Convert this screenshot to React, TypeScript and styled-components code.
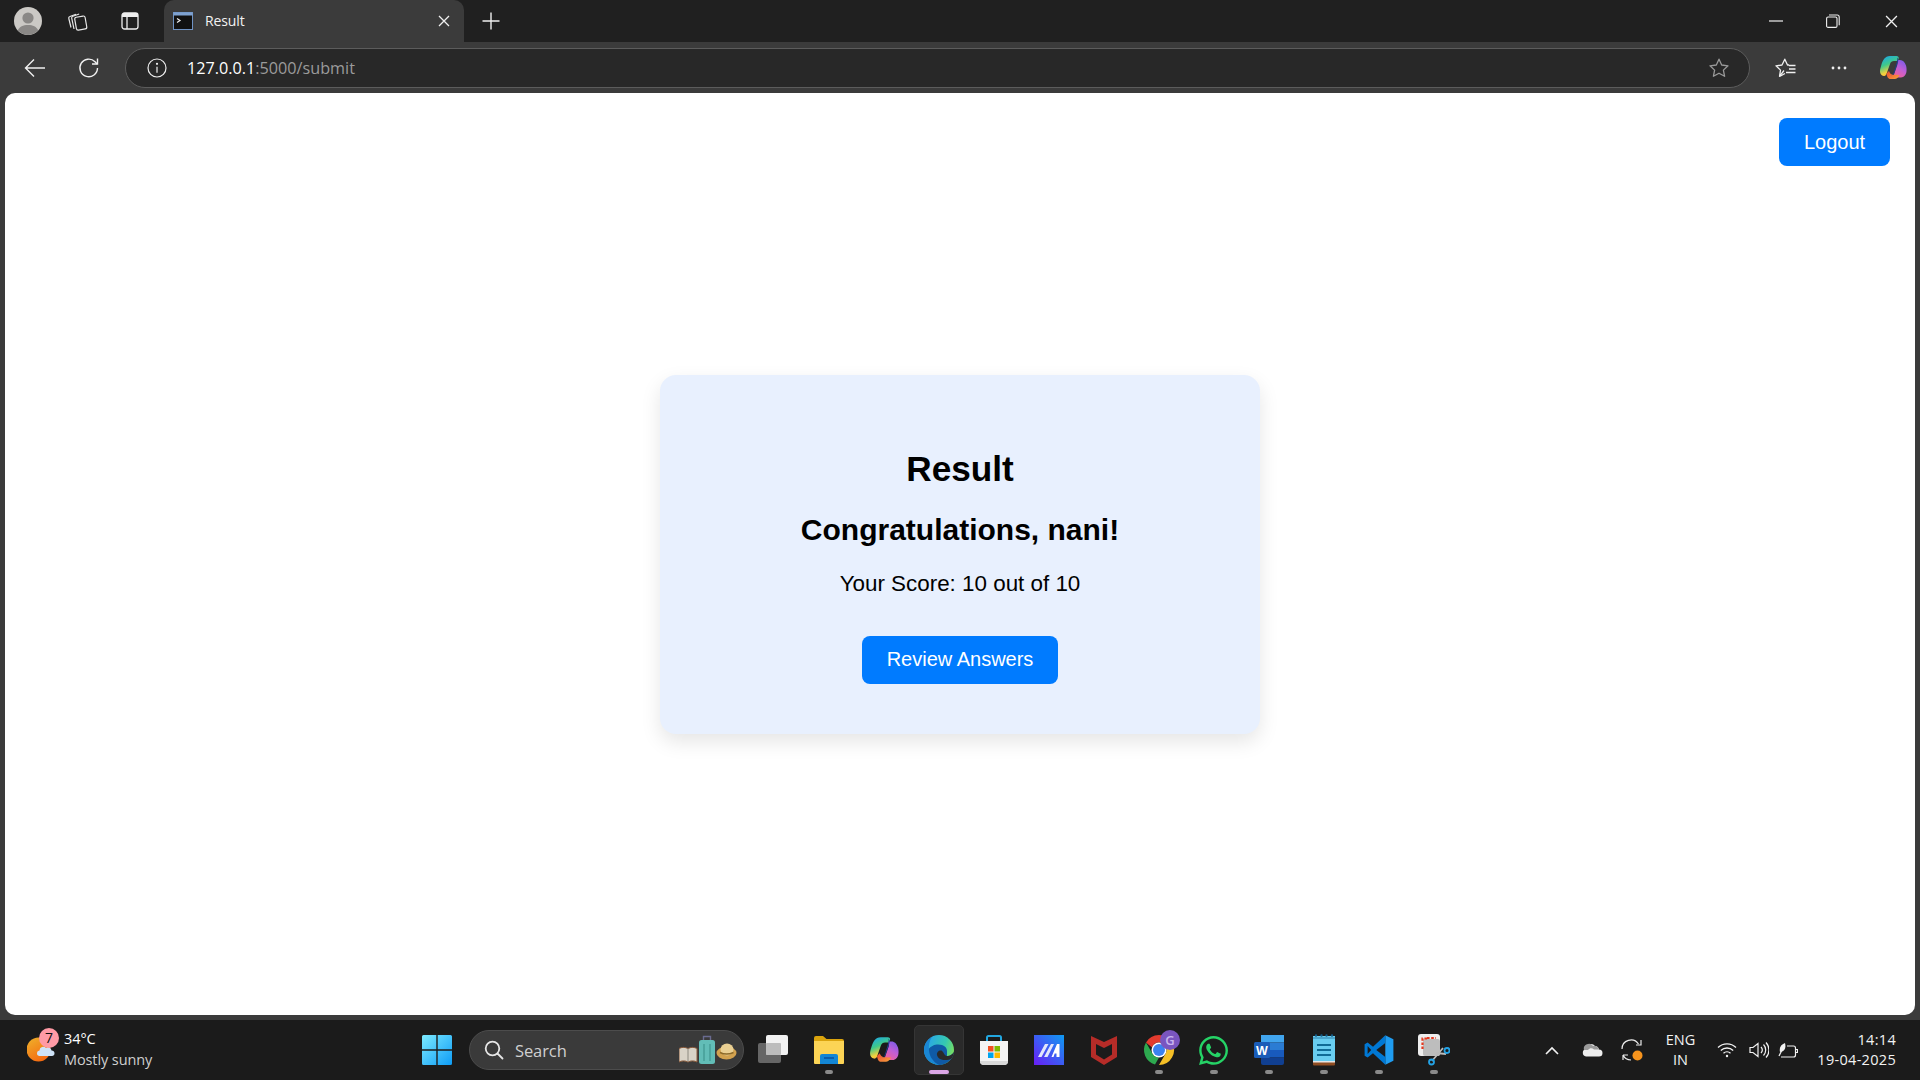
import React from "react";
import styled, { createGlobalStyle } from "styled-components";
import { FaWhatsapp } from "react-icons/fa";

const Global = createGlobalStyle`
  html, body { margin: 0; padding: 0; height: 100%; background: #3b3b3b; overflow: hidden; }
  #root { height: 100%; }
  * { box-sizing: border-box; }
`;

const Screen = styled.div`
  width: 1920px; height: 1080px; display: flex; flex-direction: column;
  font-family: "Open Sans", "Noto Sans", sans-serif; background: #3b3b3b;
`;
const TabStrip = styled.div`
  height: 42px; flex: none; display: flex; align-items: stretch; background: #202020; color: #fff;
`;
const StripButton = styled.div<{ $w: number }>`
  width: ${p => p.$w}px; flex: none; display: flex; align-items: center; justify-content: center;
`;
const Tab = styled.div`
  width: 300px; margin-left: 4px; flex: none; display: flex; align-items: center; gap: 12px;
  padding: 0 14px 0 9px; background: #3b3b3b; border-radius: 10px 10px 0 0;
`;
const TabTitle = styled.span`
  flex: 1; font-size: 14px; line-height: 42px; color: #f2f2f2; letter-spacing: -0.1px;
`;
const Spring = styled.div`flex: 1;`;
const Toolbar = styled.div`
  height: 51px; flex: none; display: flex; align-items: center; padding: 0 0 0 8px; background: #3b3b3b;
`;
const ToolButton = styled.div`
  width: 54px; height: 40px; flex: none; display: flex; align-items: center; justify-content: center;
`;
const AddressBar = styled.div`
  flex: 1; height: 40px; margin: 0 8px 0 9px; display: flex; align-items: center;
  padding: 0 20px 0 21px; border: 1px solid #5c5c5c; border-radius: 20px; background: #282828;
`;
const Url = styled.div`
  flex: 1; margin-left: 20px; font-size: 16.2px; color: #9b9b9b;
  & b { font-weight: 400; color: #fff; }
`;
const Page = styled.main`
  flex: none; height: 922px; margin: 0 5px; display: grid; background: #fff;
  border-radius: 10px; overflow: hidden;
`;
const LogoutButton = styled.button`
  grid-area: 1 / 1; justify-self: end; align-self: start; margin: 25px 25px 0 0;
  width: 111px; height: 48px; border: 0; border-radius: 8px; background: #007bff; color: #fff;
  font: 400 20px "Liberation Sans", Arial, sans-serif;
`;
const Card = styled.section`
  grid-area: 1 / 1; justify-self: center; align-self: center; width: 600px; height: 359px;
  padding: 50px 40px 0; border-radius: 16px; background: #e8f0fe; text-align: center; color: #000;
  box-shadow: 0 8px 20px rgba(0, 0, 0, 0.1); font-family: "Liberation Sans", Arial, sans-serif;
`;
const Title = styled.h1`
  margin: 24px 0 0; font-size: 35.2px; line-height: 40px; font-weight: 700;
`;
const Greeting = styled.h2`
  margin: 24px 0 0; font-size: 30px; line-height: 34px; font-weight: 700;
`;
const Score = styled.p`
  margin: 23px 0 0; font-size: 22.4px; line-height: 27px;
`;
const ReviewButton = styled.button`
  display: block; margin: 39px auto 0; width: 196px; height: 48px; border: 0; border-radius: 8px;
  background: #007bff; color: #fff; font: 400 20px "Liberation Sans", Arial, sans-serif;
`;
const Taskbar = styled.footer`
  margin-top: 5px; height: 60px; flex: none; display: flex; align-items: center; background: #1b1b1b; color: #fff;
`;
const Weather = styled.div`
  width: 418px; flex: none; height: 60px; display: flex; align-items: center; padding-left: 27px; gap: 4px;
`;
const WeatherIcon = styled.div`
  position: relative; width: 33px; height: 44px; flex: none;
`;
const WeatherBadge = styled.span`
  position: absolute; left: 12px; top: 0; width: 20px; height: 20px; border-radius: 50%;
  background: #ff9aa5; color: #111; font-size: 14px; line-height: 20px; text-align: center;
`;
const WeatherText = styled.div`
  display: flex; flex-direction: column; padding-bottom: 2px; font-size: 14.5px; line-height: 21px; color: #fff;
  letter-spacing: -0.1px;
  & small { font-size: 14.5px; color: #cfcfcf; }
`;
const StartButton = styled.div`
  width: 38px; height: 60px; flex: none; display: flex; align-items: center; justify-content: center;
`;
const SearchBox = styled.div`
  width: 275px; height: 40px; margin: 0 2px 0 13px; flex: none; display: flex; align-items: center;
  padding: 0 6px 0 14px; gap: 11px; border: 1px solid #4c4c4c; border-radius: 20px; background: #3a3a3a;
`;
const SearchLabel = styled.span`
  flex: 1; font-size: 16.5px; color: #cfcfcf; letter-spacing: -0.1px;
`;
const TaskButton = styled.div<{ $active?: boolean }>`
  position: relative; width: 55px; height: 60px; flex: none; display: flex; align-items: center; justify-content: center;
  &::before {
    content: ""; display: ${p => (p.$active ? "block" : "none")}; position: absolute;
    left: 2.5px; right: 2.5px; top: 5px; bottom: 5px; border: 1px solid #353535; border-radius: 5px; background: #2a2a2a;
  }
  & > svg { position: relative; }
`;
const RunDot = styled.span<{ $active?: boolean }>`
  position: absolute; bottom: 6px; left: 50%; transform: translateX(-50%);
  width: ${p => (p.$active ? 20 : 8)}px; height: 4px; border-radius: 2px;
  background: ${p => (p.$active ? "#dba6e6" : "#8a8a8a")};
`;
const Tray = styled.div`
  margin-left: auto; display: flex; align-items: center; height: 60px;
`;
const TrayItem = styled.div<{ $w: number }>`
  width: ${p => p.$w}px; flex: none; display: flex; align-items: center; justify-content: center;
`;
const Language = styled.div`
  width: 57px; flex: none; text-align: center; font-size: 14.5px; line-height: 20px; color: #f2f2f2;
`;
const Clock = styled.div`
  width: 117px; padding-right: 24px; flex: none; text-align: right; font-size: 14.5px; line-height: 20px; color: #f2f2f2;
  letter-spacing: 0.3px;
`;

const Avatar = () => (
  <svg width="28" height="28" viewBox="0 0 28 28">
    <circle cx="14" cy="14" r="14" fill="#cbc9c5" />
    <circle cx="14" cy="11" r="5.6" fill="#8a8886" />
    <path d="M3.8 23.5C5.5 19.5 9 18 14 18s8.500 1.500 10.200 5.500A14 14 0 0 1 3.800 23.500Z" fill="#8a8886" />
  </svg>
);
const Workspaces = () => (
  <svg width="22" height="22" viewBox="0 0 22 22" fill="none" stroke="#e8e8e8" strokeWidth="1.2">
    <path d="M4 17.500 1.800 8.500c-.3-1 .2-1.700 1.100-2L9 4.200" />
    <path d="M7 19 4.700 8.200c-.2-1 .2-1.700 1.200-2l6.300-2.200" />
    <rect x="8.500" y="6.500" width="10.500" height="13" rx="1.800" transform="rotate(-10 14 13)" fill="#202020" />
  </svg>
);
const TabActions = () => (
  <svg width="18" height="18" viewBox="0 0 18 18">
    <rect x="1" y="1" width="16" height="16" rx="2.500" fill="none" stroke="#eee" strokeWidth="1.300" />
    <path d="M1 3.500A2.500 2.500 0 0 1 3.500 1h11A2.500 2.500 0 0 1 17 3.500V5H1Z" fill="#eee" />
    <path d="M6 5v12" stroke="#eee" strokeWidth="1.300" />
  </svg>
);
const Favicon = () => (
  <svg width="20" height="18" viewBox="0 0 20 18">
    <rect x="0.500" y="0.500" width="19" height="17" fill="#111" stroke="#6f93c4" />
    <rect x="0.500" y="0.500" width="19" height="3" fill="#7ea1d0" />
    <path d="M4 6.500 7 8.500 4 10.500" fill="none" stroke="#eee" strokeWidth="1.200" />
  </svg>
);
const CloseX = ({ size = 12, w = 1.3 }: { size?: number; w?: number }) => (
  <svg width={size} height={size} viewBox="0 0 12 12" stroke="#f0f0f0" strokeWidth={w}>
    <path d="M1 1 11 11M11 1 1 11" />
  </svg>
);
const Plus = () => (
  <svg width="18" height="18" viewBox="0 0 18 18" stroke="#f0f0f0" strokeWidth="1.400"><path d="M9 0.500v17M0.500 9h17" /></svg>
);
const Minimize = () => (
  <svg width="14" height="2" viewBox="0 0 14 2" stroke="#f0f0f0" strokeWidth="1.200"><path d="M0 1h14" /></svg>
);
const Restore = () => (
  <svg width="14" height="14" viewBox="0 0 14 14" fill="none" stroke="#f0f0f0" strokeWidth="1.100">
    <rect x="0.600" y="3" width="10.400" height="10.400" rx="1.500" />
    <path d="M3 1h8.200a2 2 0 0 1 2 2v8.200" />
  </svg>
);
const Back = () => (
  <svg width="22" height="20" viewBox="0 0 22 20" fill="none" stroke="#f0f0f0" strokeWidth="1.400"><path d="M21 10H1.500M10 1.500 1.500 10l8.500 8.500" /></svg>
);
const Refresh = () => (
  <svg width="22" height="22" viewBox="0 0 22 22" fill="none" stroke="#f0f0f0" strokeWidth="1.400">
    <path d="M19.500 11a8.800 8.800 0 1 1-2.500-6.200l2.200 2.200" />
    <path d="M19.500 1.500V7h-5.500" />
  </svg>
);
const Info = () => (
  <svg width="20" height="20" viewBox="0 0 20 20" fill="none" stroke="#eee" strokeWidth="1.200">
    <circle cx="10" cy="10" r="9" /><path d="M10 8.800v6" /><circle cx="10" cy="5.800" r="0.500" fill="#eee" />
  </svg>
);
const Star = ({ color = "#9a9a9a" }: { color?: string }) => (
  <svg width="20" height="20" viewBox="0 0 20 20" fill="none" stroke={color} strokeWidth="1.300" strokeLinejoin="round">
    <path d="M10 1.200 12.700 7l6.300.800-4.600 4.300 1.200 6.200L10 15.200l-5.600 3.100 1.200-6.200L1 7.800 7.300 7Z" />
  </svg>
);
const Favorites = () => (
  <svg width="21" height="20" viewBox="0 0 21 20" fill="none" stroke="#f0f0f0" strokeWidth="1.300" strokeLinejoin="round">
    <path d="M9 12.500 4.500 18.300l1-6.200L1 7.800 7 7 9.800 1.200 12.500 7h1.500" />
    <path d="M14 7.500h6.500M14 11h6.500M11 14.500h9.500M5 18.300l5-2.800" />
  </svg>
);
const More = () => (
  <svg width="16" height="4" viewBox="0 0 16 4" fill="#eee"><circle cx="2" cy="2" r="1.400" /><circle cx="8" cy="2" r="1.400" /><circle cx="14" cy="2" r="1.400" /></svg>
);
const Copilot = ({ size = 28, id }: { size?: number; id: string }) => (
  <svg width={size} height={size} viewBox="0 0 28 28">
    <defs>
      <linearGradient id={id + "a"} x1="0.100" y1="0" x2="0.500" y2="1">
        <stop offset="0" stopColor="#1aa5ee" /><stop offset="0.450" stopColor="#3fc98a" /><stop offset="0.800" stopColor="#f6d13c" /><stop offset="1" stopColor="#f7a43a" />
      </linearGradient>
      <linearGradient id={id + "b"} x1="0.800" y1="0" x2="0.300" y2="1">
        <stop offset="0" stopColor="#7a5be8" /><stop offset="0.500" stopColor="#c05ed6" /><stop offset="1" stopColor="#f0609a" />
      </linearGradient>
      <linearGradient id={id + "c"} x1="0" y1="0" x2="1" y2="1">
        <stop offset="0" stopColor="#e8472e" /><stop offset="1" stopColor="#f9a43d" />
      </linearGradient>
    </defs>
    <path d="M11 2h6.500c1.500 0 2.500 1 2.200 2.300l-1 2.700H15c-2 0-3.300 1-3.900 2.800L7.500 20c-.5 1.500-1.800 2.300-3 2-2-.4-3.300-2-3.500-4.300-.1-2 .5-4 1.200-6.300C3.700 6.500 5.800 2 11 2Z" fill={`url(#${id}a)`} />
    <path d="M17 6h4c3 0 4.800 2.200 6 5.500.6 2 .8 4.500.4 6.500-.5 3-2.400 5.400-5.400 5.400h-8l4.300-12.500C18.700 9 19 6.500 17 6Z" fill={`url(#${id}b)`} />
    <path d="M7.500 19.500 10 17c1 2.800 2.500 4 5.500 3.800l5 .2c-1 1.800-2 3.500-4.500 4h-4.500c-2.500 0-3.600-2.500-4-5.500Z" fill={`url(#${id}c)`} />
    <path d="M18 3.500c1.300.8 1.600 2.200 1.100 3.900L15.300 19c-.6 1.600-1.700 2.200-3.300 2.200 2-.3 2.400-2 3-3.800l3-10c.3-1.400.5-2.700 0-3.900Z" fill="#1b3f8f" />
  </svg>
);
const WinLogo = () => (
  <svg width="30" height="30" viewBox="0 0 30 30">
    <defs>
      <linearGradient id="winG" x1="0" y1="0" x2="1" y2="1"><stop offset="0" stopColor="#7ceaff" /><stop offset="1" stopColor="#0e9cf5" /></linearGradient>
    </defs>
    <path d="M0 1.500A1.500 1.500 0 0 1 1.500 0h12.800v14.300H0ZM15.700 0h12.800A1.500 1.500 0 0 1 30 1.500v12.800H15.700ZM0 15.700h14.300V30H1.500A1.500 1.500 0 0 1 0 28.500ZM15.700 15.700H30v12.800a1.500 1.500 0 0 1-1.500 1.500H15.700Z" fill="url(#winG)" />
  </svg>
);
const SearchGlass = () => (
  <svg width="20" height="20" viewBox="0 0 20 20" fill="none" stroke="#e6e6e6" strokeWidth="1.800" strokeLinecap="round">
    <circle cx="8.500" cy="8.500" r="6.800" /><path d="M13.500 13.500 18.500 18.500" />
  </svg>
);
const SearchArt = () => (
  <svg width="58" height="30" viewBox="0 0 58 30">
    <path d="M0 13.500c3-1.500 6-1.500 9 0 3-1.500 6-1.500 9 0V27c-3-1.500-6-1.500-9 0-3-1.500-6-1.500-9 0Z" fill="#d9d3c7" stroke="#8a5a3a" />
    <path d="M9 13.500V27" stroke="#8d8a80" />
    <path d="M24.500 5V1.500h7V5" fill="none" stroke="#6a6b90" strokeWidth="1.400" />
    <rect x="20" y="5" width="16" height="24" rx="2.500" fill="#62bdb7" />
    <path d="M25 9v17M31 9v17" stroke="#3f9690" strokeWidth="1.200" />
    <ellipse cx="47.500" cy="18" rx="10" ry="6.500" fill="#d2a24f" />
    <ellipse cx="48" cy="14.500" rx="6.500" ry="6" fill="#e9cf92" />
    <path d="M41 17.500c4 2 9 2 13.500 0" stroke="#8c6a2a" strokeWidth="1.500" fill="none" />
  </svg>
);
const TaskViewIcon = () => (
  <svg width="32" height="30" viewBox="0 0 32 30">
    <rect x="0" y="8" width="23" height="20" rx="2" fill="#666" />
    <rect x="8" y="0" width="22" height="20" rx="2" fill="#f2f2f2" />
    <rect x="8" y="8" width="15" height="12" rx="1" fill="#bdbdbd" />
  </svg>
);
const FolderIcon = () => (
  <svg width="30" height="28" viewBox="0 0 30 28">
    <path d="M0 2a2 2 0 0 1 2-2h7l3.500 3H28a2 2 0 0 1 2 2v3H0Z" fill="#dba40d" />
    <path d="M0 5h30v22a1 1 0 0 1-1 1H1a1 1 0 0 1-1-1Z" fill="#fcd455" />
    <path d="M5 28v-8a2 2 0 0 1 2-2h14a2 2 0 0 1 2 2v8Z" transform="translate(1 0)" fill="#1386d4" />
    <path d="M10 22h10" stroke="#0a4f9c" strokeWidth="1.500" />
  </svg>
);
const EdgeIcon = () => (
  <svg width="30" height="30" viewBox="0 0 30 30">
    <defs>
      <linearGradient id="edgeB" x1="0.100" y1="0.300" x2="1" y2="0.600"><stop offset="0" stopColor="#2aa7e6" /><stop offset="0.600" stopColor="#35c9b0" /><stop offset="1" stopColor="#7de05c" /></linearGradient>
    </defs>
    <circle cx="15" cy="15" r="15" fill="url(#edgeB)" />
    <path d="M15 30C8 29 3 23 4 15 8 9 14 9 18 10c3 1 5 3 5 6v5c2 .5 5-1 7-4-.5 3-1.200 5-2.500 6.500C24.500 27.500 20 30 15 30Z" fill="#0f5aa6" />
    <path d="M15 30C6 29 0 23 0 15 0 9 4 4 8 2 5 6 4.500 11 5 15.500 5.500 22 9.500 27 15 30Z" fill="#1a86d4" />
    <path d="M17.500 15.500C15 15 12.500 17 13 20c.5 3 4 5 8 5 2.500 0 5-.5 6.500-1.500 1.500-2 2.200-4 2.500-6.500-2 3-5 4.500-7 4-3-.5-3-4-5.500-5.500Z" fill="#2a2a2a" />
  </svg>
);
const StoreIcon = () => (
  <svg width="30" height="30" viewBox="0 0 30 30">
    <path d="M8 7V2.500A1.500 1.500 0 0 1 9.500 1h11A1.500 1.500 0 0 1 22 2.500V7" fill="none" stroke="#22a7e0" strokeWidth="2" />
    <path d="M1 6h28v20a4 4 0 0 1-4 4H5a4 4 0 0 1-4-4Z" fill="#f4f4f4" />
    <path d="M1 26v0a4 4 0 0 0 4 4h20a4 4 0 0 0 4-4Z" fill="#d9d9d9" />
    <rect x="9" y="11" width="5.500" height="5.500" fill="#f25022" /><rect x="15.500" y="11" width="5.500" height="5.500" fill="#7fba00" />
    <rect x="9" y="17.500" width="5.500" height="5.500" fill="#00a4ef" /><rect x="15.500" y="17.500" width="5.500" height="5.500" fill="#ffb900" />
  </svg>
);
const MAppIcon = () => (
  <svg width="30" height="30" viewBox="0 0 30 30">
    <defs>
      <linearGradient id="mApp" x1="1" y1="0" x2="0" y2="1"><stop offset="0" stopColor="#0e9bf2" /><stop offset="1" stopColor="#6a1df5" /></linearGradient>
    </defs>
    <rect width="30" height="30" fill="url(#mApp)" />
    <path d="M4 22 11 9h3.500L7.500 22ZM10 22 17 9h3L13.500 22Z" fill="#e3e6fb" />
    <path d="M17.500 22 23 9h2.500V22h-3v-3.500h-1.800L19.500 22Z" fill="#fff" />
  </svg>
);
const McAfeeIcon = () => (
  <svg width="28" height="32" viewBox="0 0 28 32">
    <path fillRule="evenodd" d="M1 2 14 8 27 2v21l-13 8-13-8ZM6 10v10.500l8 5 8-5V10l-8 4Z" fill="#b62c28" />
  </svg>
);
const ChromeIcon = () => (
  <svg width="46" height="46" viewBox="-8 0 46 46">
    <g transform="translate(0 8)">
      <path d="M15 0a15 15 0 0 1 13 7.500H15A7.500 7.500 0 0 0 8 12.500L2 7.500A15 15 0 0 1 15 0Z" fill="#e33b2e" />
      <path d="M2 7.500 8.500 18.700A7.500 7.500 0 0 0 15 22.500L11 29.500A15 15 0 0 1 2 7.500Z" fill="#2da94f" />
      <path d="M28 7.500A15 15 0 0 1 15 30l6.500-11.300A7.500 7.500 0 0 0 21.500 11Z" fill="#f6c026" />
      <circle cx="15" cy="15" r="7.500" fill="#fff" />
      <circle cx="15" cy="15" r="6" fill="#3b82f0" />
    </g>
    <circle cx="26" cy="13" r="10" fill="#7a55bf" />
    <text x="26" y="18" textAnchor="middle" fontSize="13" fontWeight="600" fill="#c9b6ee" fontFamily="Open Sans, sans-serif">G</text>
  </svg>
);
const WordIcon = () => (
  <svg width="30" height="30" viewBox="0 0 30 30">
    <rect x="7" y="0" width="23" height="7.500" fill="#41a5ee" />
    <rect x="7" y="7.500" width="23" height="7.500" fill="#2b7cd3" />
    <rect x="7" y="15" width="23" height="7.500" fill="#185abd" />
    <path d="M7 22.500h23V28a2 2 0 0 1-2 2H9a2 2 0 0 1-2-2Z" fill="#103f91" />
    <rect x="0" y="7" width="16" height="16" rx="1.500" fill="#1a5cb8" />
    <text x="8" y="20" textAnchor="middle" fontSize="12.500" fontWeight="700" fill="#fff" fontFamily="Liberation Sans, sans-serif">W</text>
  </svg>
);
const NotepadIcon = () => (
  <svg width="24" height="32" viewBox="0 0 24 32">
    <rect x="1" y="2" width="22" height="26" fill="#68cdf0" />
    <path d="M1 27h22v3.500a1 1 0 0 1-1 1H2a1 1 0 0 1-1-1Z" fill="#8f4d22" />
    <path d="M1 27h22v1.500H1Z" fill="#e5e5e5" />
    <path d="M4 1.500h0M9.500 1.500h0M14.500 1.500h0M20 1.500h0" stroke="#145c86" strokeWidth="2.400" strokeLinecap="round" />
    <path d="M1 4h22" stroke="#2f7fa8" />
    <path d="M5 11h14M5 16h14M5 21h14" stroke="#0f6b96" strokeWidth="2" />
  </svg>
);
const VSCodeIcon = () => (
  <svg width="30" height="30" viewBox="0 0 100 100">
    <path d="M71 1 98 14v72L71 99Z" fill="#1f9cf0" />
    <path d="M71 1V27L41 50l30 23v26L30 61 12 75 2 69V31L12 25 30 39Z" fill="#0078d4" />
    <path d="M12 37 24 50 12 63Z" fill="#1b1b1b" />
  </svg>
);
const SnipIcon = () => (
  <svg width="32" height="32" viewBox="0 0 32 32">
    <rect x="0" y="0" width="22" height="22" rx="3" fill="#eeeeee" />
    <rect x="5" y="5" width="17" height="17" rx="2" fill="#bdbdbd" />
    <path d="M9 4.500H4.500V15" fill="none" stroke="#e5391f" strokeWidth="2.200" strokeDasharray="2.600 1.600" />
    <path d="M9 4h9" stroke="#e5391f" strokeWidth="2.200" strokeDasharray="2.600 1.600" />
    <path d="M14 27 25 14M18 19 28 20" stroke="#bbb" strokeWidth="1.800" />
    <circle cx="13.500" cy="28" r="2.500" fill="none" stroke="#23a3e6" strokeWidth="1.800" />
    <circle cx="29" cy="16.500" r="2.500" fill="none" stroke="#23a3e6" strokeWidth="1.800" />
  </svg>
);
const Chevron = () => (
  <svg width="14" height="9" viewBox="0 0 14 9" fill="none" stroke="#f2f2f2" strokeWidth="1.600"><path d="M1 8 7 2l6 6" /></svg>
);
const CloudIcon = () => (
  <svg width="21" height="14" viewBox="0 0 21 14">
    <path d="M4 13.500A3.800 3.800 0 0 1 4 6a5 5 0 0 1 9-3 4.500 4.500 0 0 1 4 3.500A3.500 3.500 0 0 1 17 13.500Z" fill="#ededed" />
    <path d="M2 7a5 5 0 0 1 9-4c2.500-1 5 .5 6 3.500h-5c-2-2-4.500-1.500-6 .5Z" fill="#9a9a9a" />
  </svg>
);
const SyncIcon = () => (
  <svg width="22" height="24" viewBox="0 0 22 24" fill="none" stroke="#ececec" strokeWidth="1.200">
    <path d="M1 11A9 9 0 0 1 17.500 6M20 2v5h-5" />
    <path d="M2 17h5M2 22v-5a9 9 0 0 0 8 5" />
    <circle cx="16.500" cy="17.500" r="5" fill="#f7941d" stroke="none" />
  </svg>
);
const Wifi = () => (
  <svg width="20" height="16" viewBox="0 0 20 16" fill="none" stroke="#f2f2f2" strokeWidth="1.300">
    <path d="M1 5.500a13 13 0 0 1 18 0M3.800 8.500a9 9 0 0 1 12.400 0M6.500 11.300a5 5 0 0 1 7 0" />
    <circle cx="10" cy="14" r="1.200" fill="#f2f2f2" stroke="none" />
  </svg>
);
const Speaker = () => (
  <svg width="20" height="18" viewBox="0 0 20 18" fill="none" stroke="#f2f2f2" strokeWidth="1.200">
    <path d="M1 6.500h3L9 2.500v13l-5-4H1Z" />
    <path d="M12 6a4.500 4.500 0 0 1 0 6M14.500 3.500a8 8 0 0 1 0 11M17 1.500a11 11 0 0 1 0 15" />
  </svg>
);
const Battery = () => (
  <svg width="20" height="17" viewBox="0 0 20 17" fill="none" stroke="#f2f2f2" strokeWidth="1.200">
    <path d="M9 4h6.500a2 2 0 0 1 2 2v7a2 2 0 0 1-2 2H3" />
    <path d="M18 7.500h1.500v3H18" />
    <path d="M7 1C3 2.500 1 5.500 2 10c4-.5 6.500-3.500 5-9Z" fill="#f2f2f2" stroke="none" />
    <path d="M1 14 5 6" />
  </svg>
);

const taskIcons: { key: string; el: React.ReactNode; dot?: boolean; active?: boolean }[] = [
  { key: "view", el: <TaskViewIcon /> },
  { key: "files", el: <FolderIcon />, dot: true },
  { key: "copilot", el: <Copilot size={30} id="cpB" /> },
  { key: "edge", el: <EdgeIcon />, dot: true, active: true },
  { key: "store", el: <StoreIcon /> },
  { key: "app", el: <MAppIcon /> },
  { key: "mcafee", el: <McAfeeIcon /> },
  { key: "chrome", el: <ChromeIcon />, dot: true },
  { key: "whatsapp", el: <FaWhatsapp size={33} color="#25d366" />, dot: true },
  { key: "word", el: <WordIcon />, dot: true },
  { key: "notepad", el: <NotepadIcon />, dot: true },
  { key: "vscode", el: <VSCodeIcon />, dot: true },
  { key: "snip", el: <SnipIcon />, dot: true },
];

export default function App() {
  return (
    <Screen>
      <Global />
      <TabStrip>
        <StripButton $w={55}><Avatar /></StripButton>
        <StripButton $w={45}><Workspaces /></StripButton>
        <StripButton $w={60}><TabActions /></StripButton>
        <Tab>
          <Favicon />
          <TabTitle>Result</TabTitle>
          <CloseX />
        </Tab>
        <StripButton $w={54}><Plus /></StripButton>
        <Spring />
        <StripButton $w={55}><Minimize /></StripButton>
        <StripButton $w={59}><Restore /></StripButton>
        <StripButton $w={58}><CloseX size={13} w={1.2} /></StripButton>
      </TabStrip>
      <Toolbar>
        <ToolButton><Back /></ToolButton>
        <ToolButton><Refresh /></ToolButton>
        <AddressBar>
          <Info />
          <Url><b>127.0.0.1</b>:5000/submit</Url>
          <Star />
        </AddressBar>
        <ToolButton><Favorites /></ToolButton>
        <ToolButton><More /></ToolButton>
        <ToolButton><Copilot id="cpT" /></ToolButton>
      </Toolbar>
      <Page>
        <LogoutButton>Logout</LogoutButton>
        <Card>
          <Title>Result</Title>
          <Greeting>Congratulations, nani!</Greeting>
          <Score>Your Score: 10 out of 10</Score>
          <ReviewButton>Review Answers</ReviewButton>
        </Card>
      </Page>
      <Taskbar>
        <Weather>
          <WeatherIcon>
            <svg width="33" height="44" viewBox="0 0 33 44">
              <defs>
                <linearGradient id="sun" x1="0" y1="0" x2="0.600" y2="1"><stop offset="0" stopColor="#eeb32c" /><stop offset="1" stopColor="#f56a10" /></linearGradient>
              </defs>
              <circle cx="11.500" cy="21.500" r="12" fill="url(#sun)" />
              <path d="M12 28a2.800 2.800 0 0 1 .5-5.500 3.800 3.800 0 0 1 6.500-2.500 3.500 3.500 0 0 1 5.500 2.500 2.800 2.800 0 0 1 3 3c0 1.500-1 2.500-2.500 2.500Z" fill="#cfe3f7" />
            </svg>
            <WeatherBadge>7</WeatherBadge>
          </WeatherIcon>
          <WeatherText>
            <span>34°C</span>
            <small>Mostly sunny</small>
          </WeatherText>
        </Weather>
        <StartButton><WinLogo /></StartButton>
        <SearchBox>
          <SearchGlass />
          <SearchLabel>Search</SearchLabel>
          <SearchArt />
        </SearchBox>
        {taskIcons.map(t => (
          <TaskButton key={t.key} $active={t.active}>
            {t.el}
            {t.dot && <RunDot $active={t.active} />}
          </TaskButton>
        ))}
        <Tray>
          <TrayItem $w={40}><Chevron /></TrayItem>
          <TrayItem $w={40}><CloudIcon /></TrayItem>
          <TrayItem $w={40}><SyncIcon /></TrayItem>
          <Language>ENG<br />IN</Language>
          <TrayItem $w={35}><Wifi /></TrayItem>
          <TrayItem $w={29}><Speaker /></TrayItem>
          <TrayItem $w={30}><Battery /></TrayItem>
          <Clock>14:14<br />19-04-2025</Clock>
        </Tray>
      </Taskbar>
    </Screen>
  );
}
